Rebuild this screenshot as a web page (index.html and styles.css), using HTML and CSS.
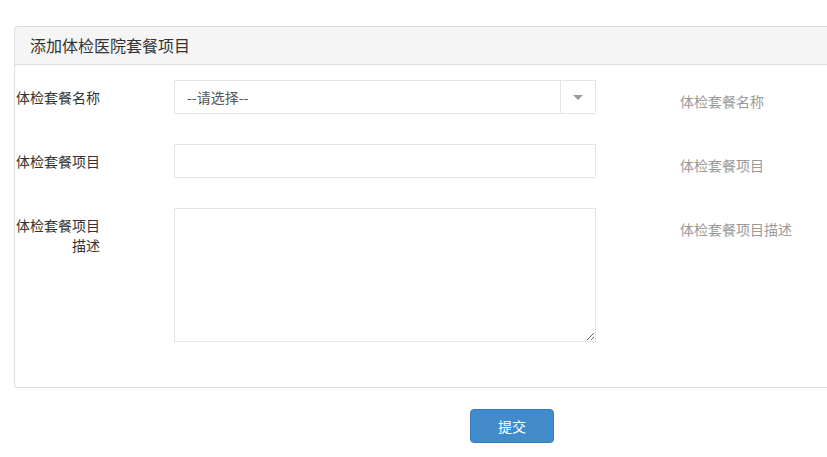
FILE: index.html
```html
<!DOCTYPE html>
<html lang="zh-CN">
<head>
  <meta charset="UTF-8">
  <title>添加体检医院套餐项目</title>
  <link rel="stylesheet" href="styles.css">
</head>
<body>
  <div class="panel">
    <div class="panel-heading">添加体检医院套餐项目</div>
    <div class="panel-body">
      <div class="form-row">
        <label class="form-label">体检套餐名称</label>
        <div class="form-control select">
          <span class="select-text">--请选择--</span>
          <span class="select-arrow"><i></i></span>
        </div>
        <span class="form-help">体检套餐名称</span>
      </div>
      <div class="form-row">
        <label class="form-label">体检套餐项目</label>
        <input class="form-control" type="text">
        <span class="form-help">体检套餐项目</span>
      </div>
      <div class="form-row">
        <label class="form-label">体检套餐项目描述</label>
        <textarea class="form-control textarea"></textarea>
        <span class="form-help">体检套餐项目描述</span>
      </div>
    </div>
  </div>
  <div class="form-actions">
    <button class="btn-primary">提交</button>
  </div>
</body>
</html>
```

FILE: styles.css
```css
html, body {
  overflow: hidden;
}
body {
  margin: 0;
  font-family: "Noto Sans CJK SC", "Microsoft YaHei", sans-serif;
  font-size: 14px;
  color: #333;
  background-color: #fff;
}
/* panel runs on past the right edge of the window */
.panel {
  margin: 26px 0 0 14px;
  border: 1px solid #ddd;
  border-right: none;
  border-radius: 4px 0 0 4px;
}
.panel-heading {
  height: 37px;
  line-height: 37px;
  padding: 0 15px;
  font-size: 16px;
  background-color: #f5f5f5;
  border-bottom: 1px solid #ddd;
  border-radius: 4px 0 0 0;
}
.panel-body {
  padding: 15px 0 45px 0;
}
.form-row {
  display: flex;
  align-items: flex-start;
  margin-bottom: 30px;
}
.form-row:last-child {
  margin-bottom: 0;
}
.form-label {
  width: 85px;
  padding-top: 7px;
  line-height: 20px;
  text-align: right;
  color: #333;
}
.form-control {
  box-sizing: border-box;
  width: 422px;
  height: 34px;
  margin-left: 74px;
  border: 1px solid #e5e5e5;
  background-color: #fff;
  font-family: inherit;
  font-size: 14px;
  color: #555;
  padding: 0 12px;
  outline: none;
}
.select {
  display: flex;
  align-items: center;
  padding: 0 0 0 12px;
}
.select-text {
  flex: 1;
  line-height: 20px;
}
.select-arrow {
  display: flex;
  align-items: center;
  justify-content: center;
  width: 34px;
  height: 100%;
  border-left: 1px solid #e5e5e5;
}
.select-arrow i {
  width: 0;
  height: 0;
  border-left: 5px solid transparent;
  border-right: 5px solid transparent;
  border-top: 5px solid #999;
}
.textarea {
  height: 134px;
  resize: both;
  padding: 6px 12px;
}
.form-help {
  margin-left: 84px;
  padding-top: 11px;
  line-height: 20px;
  color: #999;
}
.form-actions {
  padding: 21px 0 0 470px;
}
.btn-primary {
  width: 84px;
  height: 34px;
  background-color: #428bca;
  border: 1px solid #357ebd;
  border-radius: 4px;
  color: #fff;
  font-family: inherit;
  font-size: 14px;
  cursor: pointer;
}
```
